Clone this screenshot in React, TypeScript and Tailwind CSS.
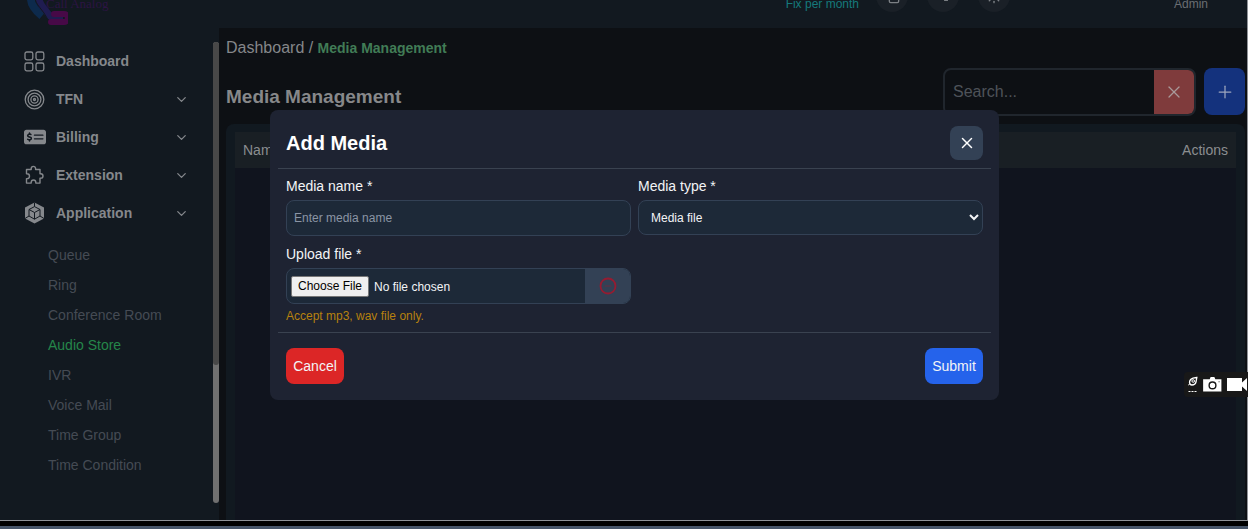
import React, { useState } from "react";
import { ChevronDown, Copy, Maximize2, Plus, Sun, X } from "lucide-react";
import { FaMoneyCheckDollar } from "react-icons/fa6";

function GridIcon() {
  return (
    <svg viewBox="0 0 21 21" className="h-[21px] w-[21px]" fill="none" stroke="currentColor" strokeWidth="1.3">
      <rect x="1" y="1" width="7.8" height="7.8" rx="1.8" />
      <rect x="12" y="1" width="7.8" height="7.8" rx="1.8" />
      <rect x="1" y="12" width="7.8" height="7.8" rx="1.8" />
      <rect x="12" y="12" width="7.8" height="7.8" rx="1.8" />
    </svg>
  );
}

function TargetIcon() {
  return (
    <svg viewBox="0 0 21 21" className="h-[21px] w-[21px]" fill="none" stroke="currentColor" strokeWidth="1.3">
      <circle cx="10.5" cy="10.5" r="9.3" />
      <circle cx="10.5" cy="10.5" r="6.4" />
      <circle cx="10.5" cy="10.5" r="3.6" />
      <circle cx="10.5" cy="10.5" r="1" />
    </svg>
  );
}

function PuzzleIcon() {
  return (
    <svg viewBox="0 0 21 21" className="h-[21px] w-[21px]" fill="none" stroke="currentColor" strokeWidth="1.4">
      <path
        d="M2.500 4.500h4.700V3.600a2.200 2.200 0 0 1 4.400 0v.9h4.400v4.200h.8a2.200 2.200 0 0 1 0 4.400h-.8v5h-4.200v-.8a2.300 2.300 0 0 0-4.600 0v.8H2.500v-4.500h.6a2.400 2.400 0 0 0 0-4.800h-.6Z"
        strokeLinejoin="round"
      />
    </svg>
  );
}

function CubeIcon() {
  return (
    <svg viewBox="0 0 21 22" className="h-[22px] w-[21px]">
      <path d="M10.500.500 20 5.500v11l-9.500 5L1 16.500v-11Z" fill="currentColor" />
      <g fill="none" stroke="#121920" strokeWidth="1">
        <path d="M10.500 4.600 16 7.500v6.500l-5.500 3.200L5 14V7.500Z" />
        <path d="M5 7.500l5.500 3 5.500-3M10.500 10.500v6.700" />
        <path d="M10.500.500v4.100M1 16.500 5 14M20 16.500 16 14" />
      </g>
    </svg>
  );
}

const menu = [
  { label: "Dashboard", icon: <GridIcon />, expandable: false },
  { label: "TFN", icon: <TargetIcon />, expandable: true },
  { label: "Billing", icon: <FaMoneyCheckDollar className="h-5 w-[22px]" />, expandable: true },
  { label: "Extension", icon: <PuzzleIcon />, expandable: true },
  { label: "Application", icon: <CubeIcon />, expandable: true },
];

const applicationLinks = [
  "Queue",
  "Ring",
  "Conference Room",
  "Audio Store",
  "IVR",
  "Voice Mail",
  "Time Group",
  "Time Condition",
];

function Header() {
  return (
    <header className="flex h-7 shrink-0 items-end overflow-hidden bg-[#121920]">
      <div className="flex items-end pl-[26px]">
        <svg viewBox="0 0 42 50" className="mb-[2px] h-[50px] w-[42px] shrink-0" fill="none">
          <path d="M5 14v9c0 7 5 12 11 17" stroke="#0d2a4c" strokeWidth="8" />
          <path d="M13 16v6c0 6 4 9 7 13s4 7 9 7h8" stroke="#1f1c50" strokeWidth="7" />
          <path d="M28 38h10a4 4 0 0 1 0 8H25" stroke="#470947" strokeWidth="6" strokeLinecap="round" />
          <path d="M9 21c0 8 8 12 13 23" stroke="#121920" strokeWidth="1" />
        </svg>
        <span className="-ml-[22px] mb-[14px] font-['Liberation_Serif',serif] text-[13px] leading-5 text-[#2c1443]">
          Call Analog
        </span>
      </div>
      <div className="ml-auto flex items-end gap-[17px] pb-4 text-xs text-[#7c8085]">
        <span className="text-[#15797c]">Fix per month</span>
        <div className="flex gap-[19px]">
          <button aria-label="Copy" className="flex h-8 w-8 items-center justify-center rounded-full bg-[#1a2027]">
            <Copy className="h-4 w-4" />
          </button>
          <button aria-label="Full screen" className="flex h-8 w-8 items-center justify-center rounded-full bg-[#1a2027]">
            <Maximize2 className="h-3 w-3 -scale-x-100" />
          </button>
          <button aria-label="Theme" className="flex h-8 w-8 items-center justify-center rounded-full bg-[#1a2027]">
            <Sun className="h-4 w-4" />
          </button>
        </div>
      </div>
      <span className="mr-[39px] ml-[164px] pb-4 text-xs text-[#6a6e73]">Admin</span>
    </header>
  );
}

function Sidebar() {
  return (
    <aside className="flex w-[219px] shrink-0 bg-[#121920]">
      <nav className="flex-1 pt-[14px] pl-6">
        {menu.map((item) => (
          <button
            key={item.label}
            className="flex h-[38px] w-full items-center pr-6 text-sm font-bold text-[#85888c]"
          >
            <span className="flex w-8 items-center">{item.icon}</span>
            {item.label}
            {item.expandable && <ChevronDown className="ml-auto h-[15px] w-[15px]" />}
          </button>
        ))}
        <ul className="pt-2 pl-6">
          {applicationLinks.map((label) => (
            <li key={label} className="flex h-[30px] items-center text-sm">
              <a href="#" className={label === "Audio Store" ? "text-[#25864a]" : "text-[#454b54]"}>
                {label}
              </a>
            </li>
          ))}
        </ul>
      </nav>
      <div className="mt-[14px] mb-[17px] w-[6px] rounded-full bg-[#707070]">
        <div className="h-[70%] rounded-full bg-[#484848]" />
      </div>
    </aside>
  );
}

function MediaPage() {
  return (
    <main className="flex min-w-0 flex-1 flex-col bg-[#0d1014] pr-[2px] pl-[7px]">
      <p className="mt-2 text-base leading-6 text-[#85878a]">
        Dashboard / <span className="text-sm font-bold text-[#417c56]">Media Management</span>
      </p>
      <div className="mt-2 flex h-12 gap-2">
        <h1 className="flex-1 pt-4 text-[19px] leading-[26px] font-bold text-[#87888a]">Media Management</h1>
        <div className="flex w-[253px] overflow-hidden rounded-lg border-2 border-[#20262d]">
          <input
            aria-label="Search"
            placeholder="Search..."
            className="min-w-0 flex-1 px-2 text-base text-[#85878a] placeholder-[#4e5359] outline-none"
          />
          <button aria-label="Clear search" className="flex w-10 items-center justify-center bg-[#7f3b3c] text-[#a9999a]">
            <X className="h-5 w-5" strokeWidth={1.5} />
          </button>
        </div>
        <button aria-label="Add" className="flex h-[47px] w-[41px] items-center justify-center rounded-lg bg-[#14327d] text-[#9ca5bd]">
          <Plus className="h-5 w-5" strokeWidth={1.5} />
        </button>
      </div>
      <div className="mt-2 flex-1 rounded-t-lg bg-[#111920] px-[9px] pt-2">
        <div className="h-full bg-[#10141e]">
          <table className="w-full text-sm text-[#8b8e90]">
            <thead>
              <tr className="h-9 bg-[#191f24]">
                <th className="px-2 text-left font-normal">Name</th>
                <th className="px-2 text-right font-normal">Actions</th>
              </tr>
            </thead>
          </table>
        </div>
      </div>
    </main>
  );
}

function AddMediaModal() {
  const [name, setName] = useState("");

  return (
    <div className="fixed inset-0 z-40 flex items-start justify-center pt-[110px] pl-[21px]">
      <form
        role="dialog"
        aria-label="Add Media"
        className="w-full max-w-[729px] rounded-lg bg-[#1e2332] text-[#f3f4f6]"
        onSubmit={(e) => e.preventDefault()}
      >
        <div className="mx-2 flex items-center justify-between border-b border-[#3a4250] px-2 pt-4 pb-2">
          <h2 className="text-xl font-bold text-white">Add Media</h2>
          <button
            type="button"
            aria-label="Close"
            className="flex h-[34px] w-[33px] items-center justify-center rounded-lg bg-[#334155] text-white"
          >
            <X className="h-[18px] w-[18px]" />
          </button>
        </div>

        <div className="grid grid-cols-2 gap-x-[7px] gap-y-[9px] px-4 pt-2 pb-2">
          <div>
            <label htmlFor="media-name" className="mb-[5px] block text-sm leading-[18px]">
              Media name *
            </label>
            <input
              id="media-name"
              value={name}
              onChange={(e) => setName(e.target.value)}
              placeholder="Enter media name"
              className="h-9 w-full rounded-lg border border-[#334155] bg-[#1d2938] px-[7px] text-xs placeholder-[#8b95a5] outline-none"
            />
          </div>
          <div>
            <label htmlFor="media-type" className="mb-[5px] block text-sm leading-[18px]">
              Media type *
            </label>
            <select
              id="media-type"
              className="h-[35px] w-full rounded-lg border border-[#334155] bg-[#1d2938] pl-2 text-xs outline-none"
            >
              <option>Media file</option>
            </select>
          </div>
          <div>
            <label htmlFor="media-upload" className="mb-[5px] block text-sm leading-[18px]">
              Upload file *
            </label>
            <div className="flex h-9 overflow-hidden rounded-lg border border-[#334155] bg-[#1d2938]">
              <input
                id="media-upload"
                type="file"
                accept=".mp3,.wav"
                className="min-w-0 flex-1 self-center pl-1 text-xs file:mr-[5px] file:h-[21px] file:rounded-xs file:border file:border-[#767676] file:bg-[#efefef] file:px-[6px] file:text-black"
              />
              <button
                type="button"
                aria-label="Remove file"
                className="flex w-[45px] items-center justify-center bg-[#334155] text-[#951c31]"
              >
                <svg viewBox="0 0 18 18" className="h-[18px] w-[18px]" fill="none" stroke="currentColor">
                  <circle cx="9" cy="9" r="7.5" strokeWidth="1.8" />
                  <path d="M5.5 9h7" strokeWidth="1" opacity="0.5" />
                </svg>
              </button>
            </div>
            <p className="mt-1 text-xs text-[#b7810e]">Accept mp3, wav file only.</p>
          </div>
        </div>

        <div className="mx-2 flex justify-between border-t border-[#3a4250] px-2 pt-[15px] pb-4 text-sm">
          <button type="button" className="h-9 w-[58px] rounded-lg bg-[#dc2626]">
            Cancel
          </button>
          <button type="submit" className="h-9 w-[58px] rounded-lg bg-[#2563eb]">
            Submit
          </button>
        </div>
      </form>
    </div>
  );
}

function CaptureBar() {
  return (
    <div className="fixed top-[372px] right-0 z-50 flex h-[25px] w-16 items-center gap-[5px] overflow-hidden rounded-l bg-[#181818] pl-1 text-white">
      <svg viewBox="0 0 10 18" className="h-[18px] w-[10px] shrink-0" fill="none" stroke="currentColor">
        <path d="M8.8 1.5 5 2.2C3 2.8 1.8 4.3 1.5 6c0 2 1 3 2.500 3s3.500-1 4-3Z" strokeWidth="1.3" />
        <circle cx="5.2" cy="5" r="1.3" />
        <path d="M0 9.5l2-2" />
        <path d="M0.5 15.5h9" strokeDasharray="2 1" />
      </svg>
      <svg viewBox="0 0 20 16" className="h-[15px] w-[19px] shrink-0">
        <path d="M5 2.500h2L8 0h4l1 2.500h6.500V15.500H0V2.500Z" fill="currentColor" />
        <circle cx="10" cy="9" r="3.600" fill="none" stroke="#181818" strokeWidth="1.500" />
        <circle cx="17" cy="5" r="0.600" fill="#181818" />
      </svg>
      <svg viewBox="0 0 20 13" className="h-[13px] w-5 shrink-0" fill="currentColor">
        <path d="M0 0h15v4.5L20 0v13l-5-4.5V13H0Z" />
      </svg>
    </div>
  );
}

export default function App() {
  return (
    <div className="flex h-screen flex-col overflow-hidden bg-black font-['Liberation_Sans',sans-serif]">
      <div className="flex min-h-0 flex-1 flex-col border-r border-b border-[#8f9298]">
        <Header />
        <div className="flex min-h-0 flex-1">
          <Sidebar />
          <MediaPage />
        </div>
      </div>
      <div className="mt-[5px] h-[3px] bg-[#475569]" />
      <AddMediaModal />
      <CaptureBar />
    </div>
  );
}
